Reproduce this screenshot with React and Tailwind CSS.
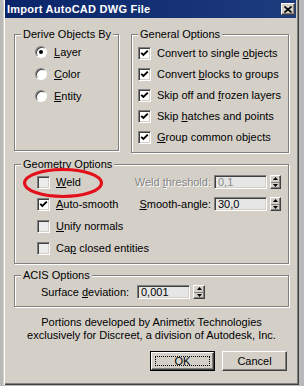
import React from "react";

const sunken =
  "border border-t-[#808080] border-l-[#808080] border-b-white border-r-white shadow-[inset_1px_1px_0_#404040,inset_-1px_-1px_0_#d4d0c8]";
const raised =
  "border border-t-white border-l-white border-b-[#404040] border-r-[#404040] shadow-[inset_-1px_-1px_0_#808080,inset_1px_1px_0_#d4d0c8]";

function Check({ checked }) {
  return (
    <span
      className={`w-[13px] h-[13px] shrink-0 flex items-center justify-center ${
        checked ? "bg-white" : "bg-[#ececec]"
      } ${sunken}`}
    >
      {checked && (
        <svg width="9" height="9" viewBox="0 0 9 9">
          <path d="M1.2 3.8 L3.4 6 L7.8 1.6" fill="none" stroke="#000" strokeWidth="1.9" />
        </svg>
      )}
    </span>
  );
}

function Radio({ checked }) {
  return (
    <span className="w-[12px] h-[12px] shrink-0 rounded-full bg-white border border-t-[#808080] border-l-[#808080] border-b-white border-r-white shadow-[inset_1px_1px_0_#404040] flex items-center justify-center">
      {checked && <span className="w-[4px] h-[4px] rounded-full bg-black" />}
    </span>
  );
}

function Spinner({ w = "w-[11px]" }) {
  return (
    <span className={`${w} h-[14px] ml-[3px] flex flex-col bg-[#d4d0c8] ${raised}`}>
      <span className="flex-1 flex items-center justify-center border-b border-[#808080]">
        <svg width="5" height="3" viewBox="0 0 5 3">
          <path d="M2.5 0 L5 3 L0 3Z" fill="#000" />
        </svg>
      </span>
      <span className="flex-1 flex items-center justify-center">
        <svg width="5" height="3" viewBox="0 0 5 3">
          <path d="M0 0 L5 0 L2.5 3Z" fill="#000" />
        </svg>
      </span>
    </span>
  );
}

function Field({ value, disabled }) {
  return (
    <span
      className={`w-[53px] h-[14px] flex items-center pl-[3px] bg-[#e6e6e6] ${sunken} ${
        disabled ? "text-[#8a8a8a]" : "text-black"
      }`}
    >
      {value}
    </span>
  );
}

function Group({ title, className, children }) {
  return (
    <div
      className={`relative border border-[#808080] shadow-[inset_1px_1px_0_#fff,1px_1px_0_#fff] ${className}`}
    >
      <span className="absolute -top-[7px] left-[6px] px-[2px] bg-[#d4d0c8] leading-[13px] whitespace-nowrap">
        {title}
      </span>
      {children}
    </div>
  );
}

function CheckRow({ checked, children, h = "h-[21px]" }) {
  return (
    <div className={`${h} flex items-center gap-[6px]`}>
      <Check checked={checked} />
      <span className="whitespace-nowrap">{children}</span>
    </div>
  );
}

function RadioRow({ checked, children }) {
  return (
    <div className="h-[22px] flex items-center gap-[7px]">
      <Radio checked={checked} />
      <span>{children}</span>
    </div>
  );
}

const disabledText = "text-[#858585] [text-shadow:1px_1px_0_#fff]";

export default function App() {
  return (
    <div className="w-[304px] h-[386px] bg-[#b9b9b9] overflow-hidden relative font-['Liberation_Sans',Arial,sans-serif] text-[11px] leading-[13px] text-black">
      <div className="ml-[3px] w-[296px] h-[385px] bg-[#d4d0c8] pl-[2px] pr-[3px] pb-[3px] flex flex-col shadow-[inset_1px_0_0_#d4d0c8,inset_2px_0_0_#fff,inset_-1px_-1px_0_#404040,inset_-2px_-2px_0_#808080]">
        {/* Title bar */}
        <div className="h-[18px] shrink-0 flex items-center justify-between bg-linear-to-r from-[#0a246a] to-[#1d3c7e] pl-[2px] pr-[1px]">
          <span className="text-white font-bold text-[11px] tracking-[0.25px] whitespace-nowrap">
            Import AutoCAD DWG File
          </span>
          <span className={`w-[14px] h-[12px] flex items-center justify-center bg-[#d4d0c8] ${raised}`}>
            <svg width="8" height="7" viewBox="0 0 8 7">
              <path d="M0.5 0.5 L7.5 6.5 M7.5 0.5 L0.5 6.5" stroke="#000" strokeWidth="1.6" />
            </svg>
          </span>
        </div>

        {/* Body */}
        <div className="flex-1 pl-[9px] pr-[7px] pt-[16px] flex flex-col">
          <div className="flex items-start gap-[12px]">
            <Group title="Derive Objects By" className="w-[105px] h-[117px] pt-[6px] pl-[20px]">
              <RadioRow checked>
                <u>L</u>ayer
              </RadioRow>
              <RadioRow>
                <u>C</u>olor
              </RadioRow>
              <RadioRow>
                <u>E</u>ntity
              </RadioRow>
            </Group>
            <Group title="General Options" className="flex-1 h-[119px] pt-[8px] pl-[6px]">
              <CheckRow checked>
                Convert to single <u>o</u>bjects
              </CheckRow>
              <CheckRow checked>
                Convert <u>b</u>locks to groups
              </CheckRow>
              <CheckRow checked>
                Skip off and <u>f</u>rozen layers
              </CheckRow>
              <CheckRow checked>
                Skip <u>h</u>atches and points
              </CheckRow>
              <CheckRow checked>
                <u>G</u>roup common objects
              </CheckRow>
            </Group>
          </div>

          <Group title="Geometry Options" className="mt-[11px] h-[100px] pt-[6px] pl-[22px] pr-[7px]">
            <div className="h-[22px] flex items-center justify-between">
              <div className="flex items-center gap-[6px]">
                <Check />
                <span>
                  <u>W</u>eld
                </span>
              </div>
              <div className="flex items-center">
                <span className={`${disabledText} mr-[3px] whitespace-nowrap`}>
                  Weld <u>t</u>hreshold:
                </span>
                <Field value="0,1" disabled />
                <Spinner />
              </div>
            </div>
            <div className="h-[22px] flex items-center justify-between">
              <div className="flex items-center gap-[6px]">
                <Check checked />
                <span>
                  <u>A</u>uto-smooth
                </span>
              </div>
              <div className="flex items-center">
                <span className="mr-[3px] whitespace-nowrap">
                  <u>S</u>mooth-angle:
                </span>
                <Field value="30,0" />
                <Spinner />
              </div>
            </div>
            <CheckRow h="h-[22px]">
              <u>U</u>nify normals
            </CheckRow>
            <CheckRow h="h-[22px]">
              Ca<u>p</u> closed entities
            </CheckRow>
          </Group>

          <Group title="ACIS Options" className="mt-[11px] h-[32px] pl-[26px] flex items-center pt-[2px]">
            <span className="w-[96px] whitespace-nowrap">
              Surface <u>d</u>eviation:
            </span>
            <Field value="0,001" />
            <Spinner w="w-[12px]" />
          </Group>

          <div className="mt-[9px] text-center leading-[13px]">
            <div>Portions developed by Animetix Technologies</div>
            <div>exclusively for Discreet, a division of Autodesk, Inc.</div>
          </div>

          <div className="mt-[9px] flex justify-end gap-[7px] pr-[2px]">
            <button className="w-[65px] h-[20px] border border-black bg-[#d4d0c8] p-0 flex">
              <span className={`flex-1 flex p-[3px] ${raised} border-t-white border-l-white`}>
                <span className="flex-1 flex items-center justify-center border border-dotted border-black">
                  OK
                </span>
              </span>
            </button>
            <button className={`w-[65px] h-[20px] bg-[#d4d0c8] flex items-center justify-center ${raised}`}>
              Cancel
            </button>
          </div>
        </div>
      </div>

      {/* Red annotation ellipse */}
      <svg className="absolute left-[22px] top-[167px]" width="82" height="32" viewBox="0 0 82 32">
        <ellipse cx="41" cy="16" rx="38.5" ry="13.5" fill="none" stroke="#e3101c" strokeWidth="3.2" />
      </svg>
    </div>
  );
}
